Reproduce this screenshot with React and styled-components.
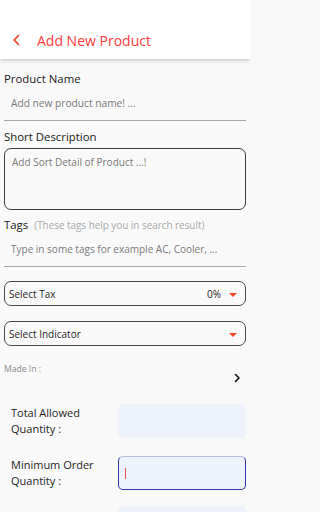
import React from 'react'
import styled, { createGlobalStyle } from 'styled-components'

const GlobalStyle = createGlobalStyle`
    body {
        margin: 0;
        background: #f9f9f9;
        font-family: "Open Sans", "Liberation Sans", sans-serif;
    }
    * { box-sizing: border-box; }
`

const Page = styled.div`
    width: 100%;
    max-width: 250px;
    height: 512px;
    overflow: hidden;
    background: #f9f9f9;
`

const Header = styled.header`
    height: 59px;
    background: #ffffff;
    display: flex;
    align-items: center;
    padding: 21px 0 0 12px;
    gap: 16px;
    box-shadow: 0 1px 4px rgba(0, 0, 0, 0.25);
    position: relative;
    z-index: 1;

    & h1 {
        margin: 0;
        font-size: 14px;
        font-weight: 400;
        color: #ff3b3b;
    }
`

const Form = styled.div`
    padding: 12px 4px 0 4px;
    display: flex;
    flex-direction: column;
`

const Label = styled.div`
    font-size: 11.4px;
    color: #1a1a1a;
    line-height: 16px;
    display: flex;
    align-items: baseline;
    gap: 6px;

    & span {
        font-size: 9.9px;
        color: #a8a8a8;
    }
`

const LineInput = styled.div`
    height: 34px;
    border-bottom: 1px solid #a9a9a9;
    display: flex;
    align-items: center;
    padding: 0 7px 2px;
    font-size: ${p => p.small ? '10px' : '10.2px'};
    color: #7a7a7a;
    margin-bottom: ${p => p.mb || 0}px;
`

const TextBox = styled.div`
    height: 62px;
    border: 1px solid #3d3d3d;
    border-radius: 7px;
    margin-top: 3px;
    padding: 6px 7px;
    font-size: 10px;
    color: #7a7a7a;
    margin-bottom: 7px;
`

const Select = styled.div`
    height: 25px;
    border: 1px solid #4a4a4a;
    border-radius: 7px;
    display: flex;
    align-items: center;
    padding: 0 8px 0 4px;
    font-size: 10px;
    color: #1f1f1f;
    margin-top: ${p => p.mt}px;

    & b {
        flex: 1;
        font-weight: 400;
    }
    & em {
        font-style: normal;
        margin-right: 8px;
    }
`

const Caret = styled.i`
    width: 0;
    height: 0;
    border-left: 4px solid transparent;
    border-right: 4px solid transparent;
    border-top: 4px solid #f0462e;
    margin-top: 2px;
`

const MadeIn = styled.div`
    margin-top: 17px;
    display: flex;
    justify-content: space-between;
    font-size: 8.6px;
    color: #8a8a8a;
    height: 20px;

    & svg {
        align-self: flex-end;
        margin-right: 5px;
    }
`

const QtyRow = styled.div`
    display: grid;
    grid-template-columns: 107px 1fr;
    align-items: center;
    margin-top: ${p => p.mt}px;
    padding-left: 7px;
`

const QtyLabel = styled.div`
    font-size: 11px;
    line-height: 16px;
    color: #1f1f1f;
`

const QtyInput = styled.div`
    height: 34px;
    border-radius: 5px;
    background: #eef2fa;
    border: 1px solid ${p => p.focus ? '#3333a8' : '#eef2fa'};
    border-top-color: ${p => p.focus ? '#b9bcd6' : '#eef2fa'};
    display: flex;
    align-items: center;
    padding-left: 6px;

    & i {
        width: 1px;
        height: 11px;
        background: #e84a4a;
    }
`

const App = () => {
    return (
        <Page>
            <GlobalStyle />
            <Header>
                <svg width="9" height="12" viewBox="0 0 9 12">
                    <path d="M6.5 1.5 L2.2 6 L6.5 10.5" fill="none" stroke="#f0462e" strokeWidth="1.8" strokeLinecap="round" strokeLinejoin="round" />
                </svg>
                <h1>Add New Product</h1>
            </Header>
            <Form>
                <Label>Product Name</Label>
                <LineInput mb={8}>Add new product name! ...</LineInput>
                <Label>Short Description</Label>
                <TextBox>Add Sort Detail of Product ...!</TextBox>
                <Label>Tags <span>(These tags help you in search result)</span></Label>
                <LineInput small>Type in some tags for example AC, Cooler, ...</LineInput>
                <Select mt={14}><b>Select Tax</b><em>0%</em><Caret /></Select>
                <Select mt={15}><b>Select Indicator</b><Caret /></Select>
                <MadeIn>
                    <span>Made In :</span>
                    <svg width="7" height="10" viewBox="0 0 7 10">
                        <path d="M1.5 1.5 L5 5 L1.5 8.5" fill="none" stroke="#111" strokeWidth="1.6" strokeLinecap="round" strokeLinejoin="round" />
                    </svg>
                </MadeIn>
                <QtyRow mt={21}>
                    <QtyLabel>Total Allowed<br />Quantity :</QtyLabel>
                    <QtyInput />
                </QtyRow>
                <QtyRow mt={18}>
                    <QtyLabel>Minimum Order<br />Quantity :</QtyLabel>
                    <QtyInput focus><i /></QtyInput>
                </QtyRow>
                <QtyRow mt={16}>
                    <QtyLabel />
                    <QtyInput />
                </QtyRow>
            </Form>
        </Page>
    )
}

export default App
